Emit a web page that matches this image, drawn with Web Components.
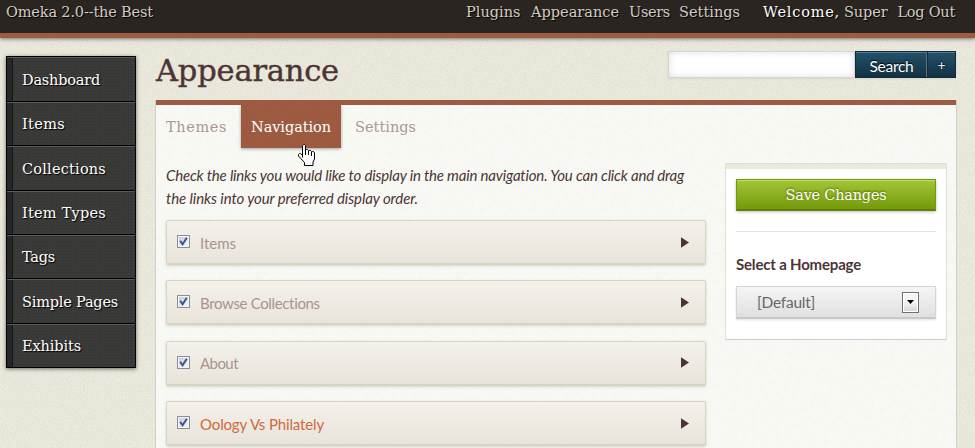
<!DOCTYPE html>
<html lang="en">
<head>
<meta charset="utf-8">
<title>Omeka Appearance</title>
<style>
  html, body { margin: 0; height: 448px; overflow: hidden; }
</style>
</head>
<body>
<omeka-admin></omeka-admin>
<script>
const grain = (freq, alpha) => `url("data:image/svg+xml,${encodeURIComponent(`<svg xmlns='http://www.w3.org/2000/svg' width='200' height='200'><filter id='n' x='0' y='0' width='100%' height='100%'><feTurbulence type='fractalNoise' baseFrequency='${freq}' numOctaves='3' stitchTiles='stitch'/><feColorMatrix values='0 0 0 0 .2  0 0 0 0 .18  0 0 0 0 .1  ${alpha} 0 0 0 ${-alpha * 0.42}'/></filter><rect width='200' height='200' filter='url(#n)'/></svg>`)}")`;
const paper = grain(0.55, 0.2), soft = grain(0.25, 0.06), brick = grain(0.5, 0.6);

function define(name, css, html, setup) {
  const tpl = document.createElement('template');
  tpl.innerHTML = `<style>*{box-sizing:border-box}${css}</style>${html}`;
  customElements.define(name, class extends HTMLElement {
    connectedCallback() {
      if (!this.shadowRoot) this.attachShadow({ mode: 'open' }).append(tpl.content.cloneNode(true));
      if (setup) setup(this, this.shadowRoot);
    }
  });
}

/* Text label tracked to a given width. */
define('fit-text', `:host{display:inline-block;white-space:nowrap}span{display:inline-block}`,
  `<span><slot></slot></span>`, (el, root) => {
    const s = root.querySelector('span'), w = +el.getAttribute('w');
    const n = el.textContent.length;
    s.style.letterSpacing = ((w - s.getBoundingClientRect().width) / n) + 'px';
    el.style.width = w + 'px';
  });

define('top-bar', `
  :host{display:flex;height:38px;background:#2b2521;border-bottom:5px solid #9f593f;padding:0 20px 0 6px;position:relative;
    box-shadow:0 1px 4px rgba(0,0,0,.5);font-size:14.5px;line-height:24px;color:#d0ccc4;text-shadow:1px 1px 1px #000}
  nav{display:flex;margin-left:auto}
  .strip{position:absolute;left:0;right:0;top:33px;height:5px;background:${brick}}
  b{font-weight:400;color:#fff}`,
  `<fit-text w="147">Omeka 2.0--the Best</fit-text>
   <nav><fit-text w="54.5" style="margin-right:10.5px">Plugins</fit-text>
   <fit-text w="88" style="margin-right:10px">Appearance</fit-text>
   <fit-text w="41" style="margin-right:9px">Users</fit-text>
   <fit-text w="61" style="margin-right:23px">Settings</fit-text>
   <b><fit-text w="77" style="margin-right:4px">Welcome,</fit-text></b>
   <fit-text w="43.5" style="margin-right:10px">Super</fit-text>
   <fit-text w="57.5">Log Out</fit-text></nav><div class="strip"></div>`);

define('side-item', `
  :host{display:flex;align-items:center;padding:1px 0 0 15px;border-top:1px solid #000;border-left:1px solid #050505;border-right:1px solid #050505;
    background-color:#3a3a39;background-image:radial-gradient(circle,#323232 35%,transparent 40%);background-size:3px 3px;
    box-shadow:inset 0 1px #5b5b5b,inset 5px 0 #272727,inset 6px 0 #151515;
    color:#fff;text-shadow:1px 1px 1px #000}`, `<slot></slot>`);

define('side-nav', `
  :host{display:grid;grid-template-rows:45px 44px 45px 44px 44px 45px 44px;width:130px;height:312px;border-bottom:1px solid #000;
    font-size:14.5px;box-shadow:0 1px 4px rgba(0,0,0,.55)}`,
  [['Dashboard',78],['Items',43],['Collections',84],['Item Types',84],['Tags',33],['Simple Pages',96],['Exhibits',59]]
    .map(([t,w]) => `<side-item><fit-text w="${w}">${t}</fit-text></side-item>`).join(''));

define('search-box', `
  :host{display:flex;width:288px;height:27px;margin-top:13px;font:15.5px Lato,"Open Sans",sans-serif;color:#fff;text-shadow:0 -1px 1px #000;box-shadow:0 1px 2px rgba(0,0,0,.08)}
  .field{width:187px;background:#fff;border:1px solid #d5d5d5;box-shadow:inset 0 0 7px #ddd}
  .btn{display:flex;align-items:center;justify-content:center;padding-top:2px;background:linear-gradient(#23526a,#123044);border:1px solid #122b39;box-shadow:inset 0 1px #56788a}
  .go{width:72px;border-right:0;box-shadow:inset 0 1px #56788a,inset -1px 0 #56788a}
  .more{width:29px;font-size:13px;padding-top:0}`,
  `<div class="field"></div><div class="btn go"><fit-text w="44">Search</fit-text></div><div class="btn more">+</div>`);

define('tab-bar', `
  :host{display:flex;height:43px;font-size:14.5px;line-height:44px;color:#ab9793}
  .tab{padding:0 10px}
  .on{width:100px;color:#fff;background:${brick},#9f593f;box-shadow:0 1px 3px rgba(0,0,0,.35);margin:0 4px;clip-path:inset(0 -5px -6px -5px)}`,
  `<div class="tab"><fit-text w="61">Themes</fit-text></div>
   <div class="tab on"><fit-text w="80">Navigation</fit-text></div>
   <div class="tab"><fit-text w="61">Settings</fit-text></div>`);

define('check-box', `
  :host{display:block;width:13px;height:13px;border:1px solid #8c8f91;background:linear-gradient(135deg,#c5cbd3,#fafafa);box-shadow:inset 0 0 0 1px #f5f5f5}
  svg{display:block}`,
  `<svg width="11" height="11" viewBox="0 0 11 11"><path d="M2.2 4.8 4.6 8.3 8.8 1.8" fill="none" stroke="#3c5493" stroke-width="2"/></svg>`);

define('link-row', `
  :host{display:flex;align-items:center;height:45px;padding:0 16px 0 10px;border:1px solid #d8d4c1;border-bottom-width:2px;border-radius:2px;
    background:linear-gradient(#f4f1eb,#e8e4da);box-shadow:0 1px 3px rgba(0,0,0,.14);font-size:15px;color:#a9948f}
  check-box{margin:-1px 10px 0 0}
  .label{padding-top:1px;flex:1}
  svg{display:block}`,
  `<check-box></check-box><div class="label"><slot></slot></div>
   <svg width="8" height="11" viewBox="0 0 8 11"><path d="M0 .3V10.7L8 5.5Z" fill="#4a3333"/></svg>`);

define('save-panel', `
  :host{display:block;width:222px;height:177px;border:1px solid #deded8;border-bottom-color:#ccc;border-top:1px solid #dcdcd6;background:linear-gradient(#ebe8dc 5px,#fff 5px);padding:15px 10px 0;border-radius:1px}
  .save{display:flex;align-items:center;justify-content:center;height:32px;background:linear-gradient(#a3c635,#739a0c);border:1px solid #749911;border-bottom:2px solid #628000;
   box-shadow:inset 0 1px #bfdc67,0 1px 3px rgba(0,0,0,.25);color:#fff;font-size:14.5px;text-shadow:0 -1px 2px #4d6703;width:200px}
  hr{border:0;border-top:1px solid #e2e2e2;margin:20px 0 0}
  h2{margin:21px 0 11px;font:bold 15px/22px Lato,sans-serif;color:#4b3535}
  .select{display:flex;align-items:center;justify-content:space-between;width:200px;height:33px;padding:0 16px 0 20px;background:linear-gradient(#f5f5f5,#e0e0e0);border:1px solid #d5d5d5;border-bottom:2px solid #c8c8c8;box-shadow:0 1px 2px rgba(0,0,0,.13);font:15.5px Lato,sans-serif;color:#6a6765}
  .drop{width:17px;height:21px;border:1px solid #707070;background:linear-gradient(#f4f4f4 50%,#d3d3d3);box-shadow:inset 0 0 0 1px #fff;display:grid;place-items:center}`,
  `<div class="save"><fit-text w="101">Save Changes</fit-text></div><hr>
   <h2><fit-text w="125">Select a Homepage</fit-text></h2>
   <div class="select"><fit-text w="58">[Default]</fit-text><div class="drop"><svg width="7" height="4"><path d="M0 0H7L3.5 4Z"/></svg></div></div>`);

define('hand-cursor', `:host{display:block;position:absolute;left:298px;top:144px;width:17px;height:22px}svg{display:block}`,
  `<svg width="17" height="22" viewBox="0 0 17 22"><path d="M4.5 13.5V1.5L5.5.5H6.5L7.5 1.5V6.5L8.5 5.5H9.5L10.5 6.5V7.5L11.5 6.5H12.5L13.5 7.5V8.5L14.5 7.5H15.5L16.5 9V15L15 18V21.5H6.5V18.5L.5 12V10.5L1.5 9.5H2.5L4.5 11.5" fill="#fff" stroke="#000"/><path d="M7.5 6V11M10.5 7V11M13.5 8V12" stroke="#000" fill="none"/></svg>`);

define('omeka-admin', `
  :host{display:flex;flex-direction:column;width:975px;height:448px;overflow:hidden;position:relative;background:${paper},#ebe9dd;
    font-family:"DejaVu Serif",serif;color:#4b3535}
  .body{display:flex;padding:0 19px 0 6px;gap:19px;flex:1;min-height:0}
  side-nav{margin-top:18px}
  main{flex:1;display:flex;flex-direction:column;min-width:0}
  .head{display:flex;justify-content:space-between;height:62px;flex:none}
  h1{margin:11px 0 0 1px;font-size:30.5px;line-height:44px;font-weight:400;-webkit-text-stroke:.4px #4b3535}
  .content{width:802px;height:350px;flex:none;background:${soft},#f8f9f4;border:solid #d0cfc5;border-width:0 1px;}
  .band{height:5px;background:${brick},#9f593f}
  .cols{display:flex;justify-content:space-between;padding:0 9px 0 10px}
  .left{width:540px}
  p{margin:16px 0 10px;font:italic 15px/23px Lato,sans-serif}
  .list{display:flex;flex-direction:column;gap:15.4px;font-family:Lato,sans-serif}
  save-panel{margin-top:15px}
  .accent{color:#cf6a40}`,
  `<top-bar></top-bar>
   <div class="body"><side-nav></side-nav><main>
    <div class="head"><h1><fit-text w="183">Appearance</fit-text></h1><search-box></search-box></div>
    <div class="content"><div class="band"></div><tab-bar></tab-bar>
     <div class="cols"><div class="left">
      <p><fit-text w="518">Check the links you would like to display in the main navigation. You can click and drag</fit-text><br><fit-text w="252">the links into your preferred display order.</fit-text></p>
      <div class="list"><link-row><fit-text w="36">Items</fit-text></link-row><link-row><fit-text w="120">Browse Collections</fit-text></link-row><link-row><fit-text w="38">About</fit-text></link-row><link-row><fit-text w="124" class="accent">Oology Vs Philately</fit-text></link-row></div>
     </div><save-panel></save-panel></div></div>
   </main></div><hand-cursor></hand-cursor>`);
</script>
</body>
</html>
